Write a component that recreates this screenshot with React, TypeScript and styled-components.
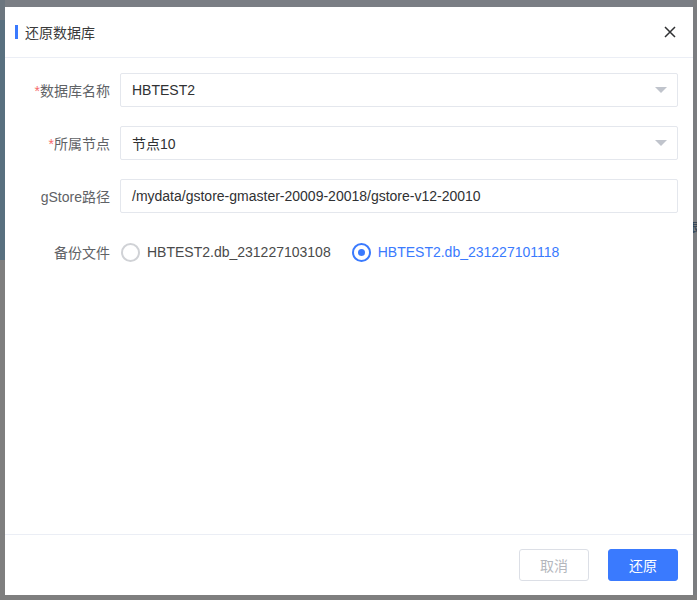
import React, { useState } from 'react'
import styled, { createGlobalStyle } from 'styled-components'

const GlobalStyle = createGlobalStyle`
  html, body {
    margin: 0;
    padding: 0;
    background: #7f7f7f;
  }
  * {
    box-sizing: border-box;
  }
`

const FONT = `"Liberation Sans", "Noto Sans CJK SC", sans-serif`
const BLUE = '#3a7afe'

const backups = ['HBTEST2.db_231227103108', 'HBTEST2.db_231227101118']

export default function App() {
  const [picked, setPicked] = useState(1)

  return (
    <>
      <GlobalStyle />
      <Backdrop>
        <PageStrip />
        <Dialog>
          <Header>
            <Title>还原数据库</Title>
            <CloseButton aria-label="close">
              <svg width="12" height="12" viewBox="0 0 12 12">
                <path d="M1 1 L11 11 M11 1 L1 11" stroke="#303133" strokeWidth="1.5" />
              </svg>
            </CloseButton>
          </Header>

          <Form>
            <Row>
              <Label><Star>*</Star>数据库名称</Label>
              <Field>
                <Value>HBTEST2</Value>
                <Caret />
              </Field>
            </Row>
            <Row>
              <Label><Star>*</Star>所属节点</Label>
              <Field>
                <Value>节点10</Value>
                <Caret />
              </Field>
            </Row>
            <Row>
              <Label>gStore路径</Label>
              <Field>
                <Value>/mydata/gstore-gmaster-20009-20018/gstore-v12-20010</Value>
              </Field>
            </Row>
            <RadioRow>
              <Label>备份文件</Label>
              <RadioGroup>
                {backups.map((name, i) => (
                  <Radio key={name} $checked={picked === i} onClick={() => setPicked(i)}>
                    <Dot $checked={picked === i} />
                    {name}
                  </Radio>
                ))}
              </RadioGroup>
            </RadioRow>
          </Form>

          <Footer>
            <Button>取消</Button>
            <Button $primary>还原</Button>
          </Footer>
        </Dialog>
        <SideStrip>跟</SideStrip>
      </Backdrop>
    </>
  )
}

const Backdrop = styled.div`
  position: relative;
  width: 697px;
  height: 600px;
  display: flex;
  padding: 7px 0 5px 0;
  background: linear-gradient(#7a7e84 0 7px, #7f7f7f 7px);
  overflow: hidden;
`

const PageStrip = styled.div`
  width: 5px;
  flex-shrink: 0;
  margin-top: -7px;
  height: 260px;
  background: linear-gradient(#6c767f 0 20px, #58707f 20px);
`

const SideStrip = styled.div`
  flex: 1;
  padding-top: 218px;
  margin-top: -7px;
  background: #7b7d80;
  color: #2c3e50;
  font: 12px ${FONT};
  overflow: hidden;
  white-space: nowrap;
  text-indent: -6px;
`

const Dialog = styled.div`
  width: 688px;
  height: 588px;
  background: #fff;
  display: flex;
  flex-direction: column;
  font-family: ${FONT};
`

const Header = styled.div`
  height: 51px;
  flex-shrink: 0;
  display: flex;
  align-items: center;
  justify-content: space-between;
  padding: 0 17px 0 10px;
  border-bottom: 1px solid #ebeef5;
`

const Title = styled.div`
  font-size: 14px;
  color: #3a3a3a;
  display: flex;
  align-items: center;
  gap: 7px;
  &::before {
    content: '';
    width: 3px;
    height: 14px;
    background: ${BLUE};
  }
`

const CloseButton = styled.button`
  border: 0;
  background: none;
  padding: 0;
  display: flex;
  cursor: pointer;
`

const Form = styled.div`
  flex: 1;
  display: flex;
  flex-direction: column;
  gap: 19px;
  padding: 15px 15px 0 0;
`

const Row = styled.div`
  display: flex;
  align-items: center;
  height: 34px;
`

const RadioRow = styled(Row)`
  margin-top: 3px;
`

const Label = styled.div`
  width: 115px;
  flex-shrink: 0;
  padding-right: 10px;
  text-align: right;
  font-size: 14px;
  color: #606266;
`

const Star = styled.span`
  color: #f56c6c;
`

const Field = styled.div`
  flex: 1;
  height: 34px;
  display: flex;
  align-items: center;
  justify-content: space-between;
  padding: 0 10px 0 11px;
  border: 1px solid #e4e7ed;
  border-radius: 2px;
`

const Value = styled.span`
  font-size: 14px;
  color: #303133;
`

const Caret = styled.span`
  width: 0;
  height: 0;
  border-left: 6px solid transparent;
  border-right: 6px solid transparent;
  border-top: 6px solid #c0c4cc;
`

const RadioGroup = styled.div`
  display: flex;
  align-items: center;
  gap: 21px;
  padding-left: 1px;
`

const Radio = styled.label<{ $checked: boolean }>`
  display: flex;
  align-items: center;
  gap: 7px;
  font-size: 14px;
  color: ${p => (p.$checked ? BLUE : '#4a4a4a')};
  cursor: pointer;
`

const Dot = styled.span<{ $checked: boolean }>`
  width: 19px;
  height: 19px;
  border-radius: 50%;
  border: 2px solid ${p => (p.$checked ? BLUE : '#d0d2d6')};
  display: flex;
  align-items: center;
  justify-content: center;
  &::after {
    content: '';
    width: 7px;
    height: 7px;
    border-radius: 50%;
    background: ${BLUE};
    display: ${p => (p.$checked ? 'block' : 'none')};
  }
`

const Footer = styled.div`
  height: 61px;
  flex-shrink: 0;
  border-top: 1px solid #ebeef5;
  display: flex;
  align-items: center;
  justify-content: flex-end;
  gap: 19px;
  padding: 0 15px 1px 0;
`

const Button = styled.button<{ $primary?: boolean }>`
  width: 70px;
  height: 32px;
  border-radius: 3px;
  font: 14px ${FONT};
  cursor: pointer;
  border: 1px solid ${p => (p.$primary ? BLUE : '#dcdfe6')};
  background: ${p => (p.$primary ? BLUE : '#fff')};
  color: ${p => (p.$primary ? '#fff' : '#b4b7bd')};
`
